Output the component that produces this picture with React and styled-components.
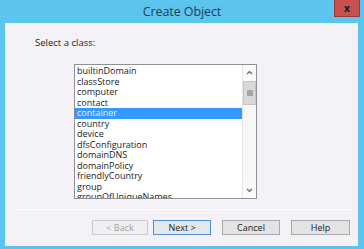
import React from 'react';
import styled, { createGlobalStyle } from 'styled-components';

const GlobalStyle = createGlobalStyle`
    html, body {
        margin: 0;
        padding: 0;
        background: #5bc5ee;
    }
    * { box-sizing: border-box; }
`;

const Window = styled.div`
    width: 364px;
    height: 249px;
    background: #5bc5ee;
    display: flex;
    flex-direction: column;
    font-family: "Open Sans", "Noto Sans", sans-serif;
    overflow: hidden;
`;

const TitleBar = styled.div`
    height: 23px;
    display: grid;
    grid-template-columns: 1fr auto 1fr;
    align-items: start;
    .title {
        grid-column: 2;
        font-size: 12.5px;
        line-height: 23px;
        color: #1c3d60;
        letter-spacing: -0.1px;
    }
`;

const CloseButton = styled.div`
    grid-column: 3;
    justify-self: end;
    margin-right: 4px;
    width: 26px;
    height: 17px;
    background: #c75050;
    border: 1px solid #9e3a3a;
    border-top: none;
    display: flex;
    align-items: center;
    justify-content: center;
    color: #1b1b1b;
    font-family: "DejaVu Sans", sans-serif;
    font-weight: bold;
    font-size: 10px;
`;

const Client = styled.div`
    flex: 1;
    margin: 0 6px 3px 5px;
    background: #f4f2f7;
    display: flex;
    flex-direction: column;
    padding-top: 13px;
`;

const Label = styled.div`
    padding-left: 30px;
    font-size: 9.5px;
    line-height: 14px;
    color: #1a1a1a;
`;

const ListBox = styled.div`
    margin: 14px 0 0 69px;
    width: 183px;
    height: 135px;
    border: 1px solid #8e9096;
    background: #fff;
    display: flex;
    overflow: hidden;
`;

const Items = styled.div`
    flex: 1;
    padding-top: 1px;
    overflow: hidden;
`;

const Item = styled.div`
    height: 10.5px;
    line-height: 10.5px;
    padding-left: 2px;
    font-size: 9px;
    white-space: nowrap;
    color: ${p => (p.$selected ? '#e8f3ff' : '#1a1a1a')};
    background: ${p => (p.$selected ? '#3399ff' : 'transparent')};
`;

const ScrollBar = styled.div`
    width: 14px;
    border-left: 1px solid #e6e6e6;
    background: #f7f7f7;
    display: flex;
    flex-direction: column;
`;

const Arrow = styled.div`
    height: 15px;
    display: flex;
    align-items: center;
    justify-content: center;
    background: #fbfbfb;
`;

const Thumb = styled.div`
    margin: 1px 0 0 0;
    height: 24px;
    background: #d9d9d9;
    border: 1px solid #c6c6c6;
    display: flex;
    align-items: center;
    justify-content: center;
`;

const Track = styled.div`
    flex: 1;
`;

const Separator = styled.div`
    margin: 10px 8px 0 8px;
    height: 1px;
    background: #a8a8ac;
    border-bottom: 1px solid #fff;
`;

const ButtonRow = styled.div`
    margin: 10px 8px 0 0;
    display: flex;
    justify-content: flex-end;
    gap: 11px;
`;

const Group = styled.div`
    display: flex;
    gap: 5px;
`;

const Button = styled.div`
    width: ${p => p.$w || 58}px;
    height: 15px;
    display: flex;
    align-items: center;
    justify-content: center;
    font-size: 9px;
    background: ${p => (p.$default ? '#e4e8ec' : p.$disabled ? '#f0eff2' : '#e3e3e3')};
    border: 1px solid ${p => (p.$default ? '#4f8fd0' : p.$disabled ? '#c9c9cc' : '#a9a9a9')};
    color: ${p => (p.$disabled ? '#a2a2a6' : '#1a1a1a')};
`;

const classes = [
    'builtinDomain', 'classStore', 'computer', 'contact', 'container', 'country',
    'device', 'dfsConfiguration', 'domainDNS', 'domainPolicy', 'friendlyCountry',
    'group', 'groupOfUniqueNames', 'inetOrgPerson', 'intellimirrorGroup',
];

function Chevron({ up }) {
    return (
        <svg width="7" height="5" viewBox="0 0 7 5">
            <path d={up ? 'M1 4 L3.5 1.5 L6 4' : 'M1 1 L3.5 3.5 L6 1'} fill="none" stroke="#606060" strokeWidth="1.1" />
        </svg>
    );
}

export default function App() {
    const selected = 'container';

    return (
        <Window>
            <GlobalStyle />
            <TitleBar>
                <div className='title'>Create Object</div>
                <CloseButton>x</CloseButton>
            </TitleBar>
            <Client>
                <Label>Select a class:</Label>
                <ListBox>
                    <Items>
                        {classes.map(c => (
                            <Item key={c} $selected={c === selected}>{c}</Item>
                        ))}
                    </Items>
                    <ScrollBar>
                        <Arrow><Chevron up /></Arrow>
                        <Thumb>
                            <svg width="6" height="6" viewBox="0 0 6 6">
                                <path d="M0 1 H6 M0 3 H6 M0 5 H6" stroke="#6a6a6a" strokeWidth="0.9" />
                            </svg>
                        </Thumb>
                        <Track />
                        <Arrow><Chevron /></Arrow>
                    </ScrollBar>
                </ListBox>
                <Separator />
                <ButtonRow>
                    <Group>
                        <Button $w={56} $disabled>&lt; Back</Button>
                        <Button $default>Next &gt;</Button>
                    </Group>
                    <Button>Cancel</Button>
                    <Button $w={59}>Help</Button>
                </ButtonRow>
            </Client>
        </Window>
    );
}
